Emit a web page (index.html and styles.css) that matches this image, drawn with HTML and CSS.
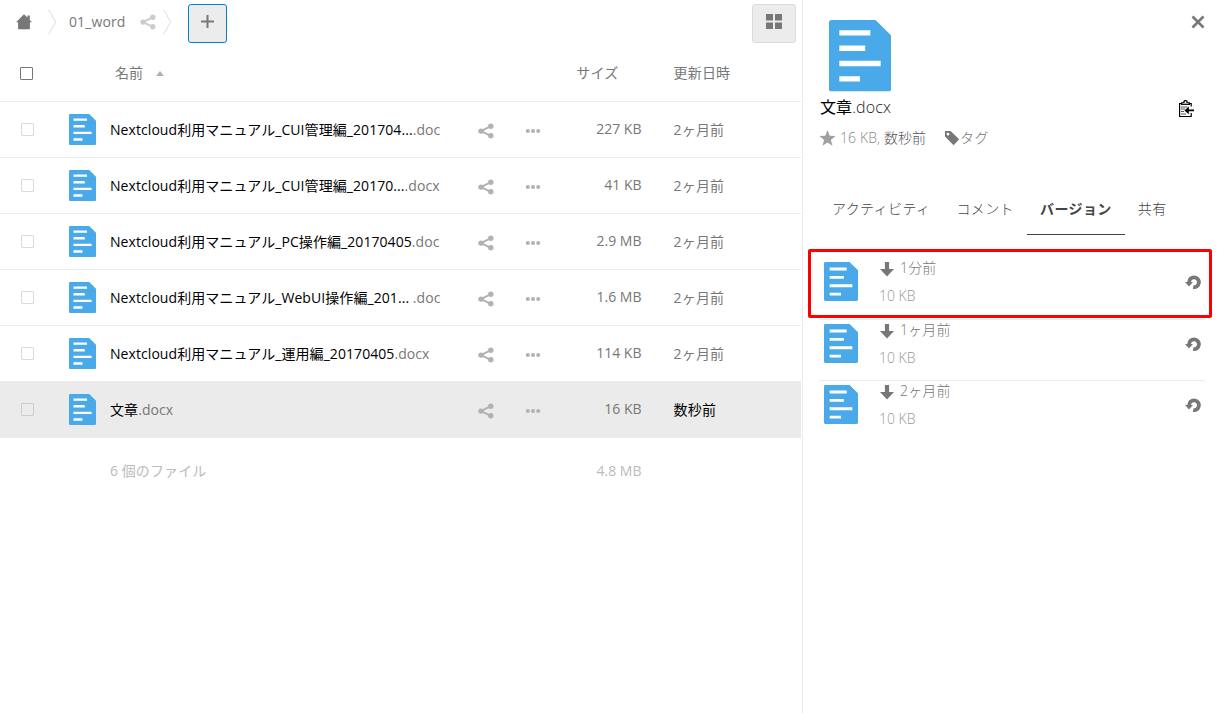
FILE: index.html
```html
<!DOCTYPE html>
<html lang="ja">
<head>
    <meta charset="UTF-8">
    <meta name="viewport" content="width=device-width, initial-scale=1.0">
    <title>01_word - ファイル</title>
    <link rel="stylesheet" href="styles.css">
</head>
<body>
    <!-- shared icons -->
    <svg class="sprite">
        <symbol id="doc" viewBox="0 0 12 14" preserveAspectRatio="none">
            <path fill="#4aaae9" d="M.5 0H9l3 3v10.5a.5.5 0 0 1-.5.5H.5a.5.5 0 0 1-.5-.5V.5A.5.5 0 0 1 .5 0z"/>
            <path fill="#fff" d="M2 2h6v1.05H2zM2 5h5v1.05H2zM2 8h8v1.05H2zM2 11h4v1.05H2z"/>
        </symbol>
        <symbol id="share" viewBox="0 0 16 16">
            <path d="M3 8.2 12.8 3.2M3 8.2l9.8 4.6" fill="none" stroke="currentColor" stroke-width="2"/>
            <circle cx="3" cy="8.1" r="2.7"/><circle cx="12.8" cy="3.2" r="2.7"/><circle cx="12.8" cy="12.8" r="2.7"/>
        </symbol>
        <symbol id="more" viewBox="0 0 16 16">
            <circle cx="2.8" cy="8" r="2.05"/><circle cx="8" cy="8" r="2.05"/><circle cx="13.2" cy="8" r="2.05"/>
        </symbol>
        <symbol id="down" viewBox="0 0 16 16">
            <path d="M5.9 1h4.2v7H15l-7 7.5L1 8h4.9z"/>
        </symbol>
        <symbol id="restore" viewBox="0 0 16 16">
            <path d="M4.1 8.3A4.9 4.9 0 1 1 8.2 13.1" fill="none" stroke="currentColor" stroke-width="3.8"/>
            <path d="M0 8h8L4 12.4z"/>
        </symbol>
    </svg>

    <div class="app">
        <div class="files">
            <div class="controls">
                <svg class="home" viewBox="0 0 16 16"><path d="M8 .2 0 8.2h2.1v7.1h4.4v-4h3v4h4.4V8.2H16l-2.2-2.2V1.5h-2.4v2.1z"/><path d="M6 10h4v5.3H6z"/></svg>
                <svg class="sep" viewBox="0 0 9 26"><path d="M.6.6 7.6 13 .6 25.4"/></svg>
                <span class="crumb">01_word</span>
                <svg class="crumb-share"><use href="#share"/></svg>
                <svg class="sep" viewBox="0 0 9 26"><path d="M.6.6 7.6 13 .6 25.4"/></svg>
                <button class="new"><svg viewBox="0 0 13 13"><path d="M5.5 0h2v5.5H13v2H7.5V13h-2V7.5H0v-2h5.5z"/></svg></button>
                <button class="view"><svg viewBox="0 0 16 15"><path d="M0 0h7v6.5H0zM9 0h7v6.5H9zM0 8.5h7V15H0zM9 8.5h7V15H9z"/></svg></button>
            </div>

            <div class="row head">
                <span class="check"></span>
                <span class="name">名前 <i class="sort"></i></span>
                <span class="size">サイズ</span>
                <span class="date">更新日時</span>
            </div>
            <div class="row">
                <span class="check"></span>
                <svg class="doc"><use href="#doc"/></svg>
                <span class="name">Nextcloud利用マニュアル_CUI管理編_201704...<em>.doc</em></span>
                <svg class="share"><use href="#share"/></svg>
                <svg class="more"><use href="#more"/></svg>
                <span class="size">227 KB</span>
                <span class="date">2ヶ月前</span>
            </div>
            <div class="row">
                <span class="check"></span>
                <svg class="doc"><use href="#doc"/></svg>
                <span class="name">Nextcloud利用マニュアル_CUI管理編_20170...<em>.docx</em></span>
                <svg class="share"><use href="#share"/></svg>
                <svg class="more"><use href="#more"/></svg>
                <span class="size">41 KB</span>
                <span class="date">2ヶ月前</span>
            </div>
            <div class="row">
                <span class="check"></span>
                <svg class="doc"><use href="#doc"/></svg>
                <span class="name">Nextcloud利用マニュアル_PC操作編_20170405<em>.doc</em></span>
                <svg class="share"><use href="#share"/></svg>
                <svg class="more"><use href="#more"/></svg>
                <span class="size">2.9 MB</span>
                <span class="date">2ヶ月前</span>
            </div>
            <div class="row">
                <span class="check"></span>
                <svg class="doc"><use href="#doc"/></svg>
                <span class="name">Nextcloud利用マニュアル_WebUI操作編_201... <em>.doc</em></span>
                <svg class="share"><use href="#share"/></svg>
                <svg class="more"><use href="#more"/></svg>
                <span class="size">1.6 MB</span>
                <span class="date">2ヶ月前</span>
            </div>
            <div class="row">
                <span class="check"></span>
                <svg class="doc"><use href="#doc"/></svg>
                <span class="name">Nextcloud利用マニュアル_運用編_20170405<em>.docx</em></span>
                <svg class="share"><use href="#share"/></svg>
                <svg class="more"><use href="#more"/></svg>
                <span class="size">114 KB</span>
                <span class="date">2ヶ月前</span>
            </div>
            <div class="row selected">
                <span class="check"></span>
                <svg class="doc"><use href="#doc"/></svg>
                <span class="name">文章<em>.docx</em></span>
                <svg class="share"><use href="#share"/></svg>
                <svg class="more"><use href="#more"/></svg>
                <span class="size">16 KB</span>
                <span class="date">数秒前</span>
            </div>
            <div class="row summary">
                <span class="name">6 個のファイル</span>
                <span class="size">4.8 MB</span>
            </div>
        </div>

        <div class="sidebar">
            <div class="top">
                <svg class="preview"><use href="#doc"/></svg>
                <svg class="close" viewBox="0 0 14 14"><path d="M1.5 1.5l11 11M12.5 1.5l-11 11"/></svg>
            </div>
            <div class="title">
                <span>文章<em>.docx</em></span>
                <svg class="clip" viewBox="0 0 17 18">
                    <path d="M13.2 6.5V3.5H1.6v13h11.6v-3.5" fill="none" stroke="#000" stroke-width="1.2"/>
                    <path d="M3 2.2h2.2a2.3 2.3 0 0 1 4.6 0H12V5H3z"/>
                    <path d="M4.4 3.2h6.2v.9H4.4z" fill="#ccc"/>
                    <circle cx="7.5" cy="2.2" r="1" fill="#fff"/>
                    <path d="M3 7h6.5M3 9h4M3 11.5h3M3 14h5" stroke="#555" stroke-width="1"/>
                    <path d="M6.4 10.4 10.8 6.6v2.9H16v1.8h-5.2v2.9z"/>
                </svg>
            </div>
            <div class="meta">
                <svg class="star" viewBox="0 0 16 16"><path d="M8 0l2.2 5.7 5.8.3-4.6 3.9 1.6 5.9L8 12.4l-5 3.4 1.6-5.9L0 6l5.8-.3z"/></svg>
                <span class="info">16 KB, <b>数秒前</b></span>
                <svg class="tag" viewBox="0 0 16 16"><path fill-rule="evenodd" d="M1.4 1h5.2l8.6 8.2-5.6 6L1 6.6V1.4zM4 2.8a1.4 1.4 0 1 0 0 2.8 1.4 1.4 0 0 0 0-2.8z"/></svg>
                <span class="tag-label">タグ</span>
            </div>
            <div class="tabs">
                <span>アクティビティ</span>
                <span>コメント</span>
                <span class="active">バージョン</span>
                <span>共有</span>
            </div>
            <div class="versions">
                <div class="marker"></div>
                <div class="version">
                    <svg class="vdoc"><use href="#doc"/></svg>
                    <div class="vinfo">
                        <div class="when"><svg><use href="#down"/></svg>1分前</div>
                        <div class="vsize">10 KB</div>
                    </div>
                    <svg class="restore"><use href="#restore"/></svg>
                </div>
                <div class="version">
                    <svg class="vdoc"><use href="#doc"/></svg>
                    <div class="vinfo">
                        <div class="when"><svg><use href="#down"/></svg>1ヶ月前</div>
                        <div class="vsize">10 KB</div>
                    </div>
                    <svg class="restore"><use href="#restore"/></svg>
                </div>
                <div class="version">
                    <svg class="vdoc"><use href="#doc"/></svg>
                    <div class="vinfo">
                        <div class="when"><svg><use href="#down"/></svg>2ヶ月前</div>
                        <div class="vsize">10 KB</div>
                    </div>
                    <svg class="restore"><use href="#restore"/></svg>
                </div>
            </div>
        </div>
    </div>
</body>
</html>
```
FILE: styles.css
```css
* {
    box-sizing: border-box;
}

body {
    margin: 0;
    background: #fff;
    color: #000;
    font-family: "Open Sans", "Noto Sans CJK JP", sans-serif;
    font-size: 14px;
    line-height: 20px;
    overflow: hidden;
}

svg {
    display: block;
    flex-shrink: 0;
    fill: currentColor;
}

em, b, i {
    font-style: normal;
    font-weight: inherit;
}

.sprite {
    display: none;
}

.app {
    display: flex;
    height: 713px;
}

.files {
    width: 801px;
    margin-right: 1px;
}

/* breadcrumbs and buttons */
.controls {
    display: flex;
    align-items: center;
    height: 45px;
    padding: 0 5px 1px 16px;
    color: #777;
}

.home {
    width: 16px;
    height: 16px;
}

.sep {
    width: 9px;
    height: 26px;
    margin-left: 16px;
    fill: none;
    stroke: #ddd;
}

.crumb {
    margin-left: 12px;
    padding-bottom: 1px;
    letter-spacing: .12px;
}

.crumb-share {
    width: 16px;
    height: 16px;
    margin-left: 14px;
    color: #ccc;
}

.crumb-share + .sep {
    margin-left: 7px;
}

button {
    display: flex;
    justify-content: center;
    height: 39px;
    margin: 3px 0 0;
    padding: 10px 0 0;
    background: #ececec;
    border: 1px solid #dcdcdc;
    border-radius: 3px;
    color: #777;
}

.new {
    width: 39px;
    margin-left: 16px;
    border-color: #0082c9;
}

.new svg {
    width: 13px;
    height: 13px;
}

.view {
    width: 44px;
    margin-left: auto;
    padding-top: 9px;
}

.view svg {
    width: 16px;
    height: 15px;
}

/* file list */
.row {
    display: grid;
    grid-template-columns: 69px 41px 367.5px 47.5px 46px 70.5px 1fr;
    align-items: center;
    height: 56px;
    border-bottom: 1px solid #ebebeb;
}

.row.head {
    height: 57px;
    color: #777;
}

.check {
    width: 13px;
    height: 13px;
    margin-left: 21px;
    border: 1px solid #dadada;
    border-radius: 1px;
}

.head .check {
    margin-left: 20px;
    border-color: #777;
}

.doc {
    width: 27px;
    height: 31px;
}

.name {
    grid-column: 3;
    white-space: nowrap;
    letter-spacing: .07px;
}

.name em {
    color: #777;
}

.head .name {
    padding-left: 5px;
}

.sort {
    display: inline-block;
    margin: 0 0 2px 9px;
    border: 4px solid transparent;
    border-top: 0;
    border-bottom: 5px solid #b0b0b0;
}

.share, .more {
    width: 16px;
    height: 16px;
    margin-top: 3px;
    color: #b2b2b2;
}

.size {
    grid-column: 6;
    padding-bottom: 2px;
    text-align: right;
    color: #777;
}

.head .size {
    padding: 0 23px 0 0;
    margin-left: -30px;
    letter-spacing: .2px;
}

.date {
    grid-column: 7;
    padding-left: 32px;
    letter-spacing: .2px;
    color: #777;
}

.selected {
    background: #ebebeb;
}

.selected .check {
    border-color: #ccc;
}

.selected .date {
    color: #000;
}

.row.summary {
    height: 66px;
    border: 0;
    color: #bbb;
}

.summary .size {
    padding: 0;
    color: #bbb;
}

/* details sidebar */
.sidebar {
    flex: 1;
    border-left: 1px solid #ebebeb;
    padding: 20px 14px 0 16px;
    font-weight: 300;
}

.top {
    display: flex;
    justify-content: space-between;
    height: 75px;
    padding-left: 10px;
}

.preview {
    width: 62px;
    height: 71.5px;
}

.close {
    width: 14px;
    height: 14px;
    margin-top: -5px;
    fill: none;
    stroke: #777;
    stroke-width: 2.6;
}

.title {
    display: flex;
    justify-content: space-between;
    height: 25px;
    padding: 0 10px 0 1px;
    font-size: 16px;
    font-weight: 400;
    line-height: 25px;
    letter-spacing: .1px;
}

.title em {
    font-weight: 300;
    color: #222;
}

.clip {
    width: 17px;
    height: 18px;
    margin-top: 5px;
}

.meta {
    display: flex;
    align-items: center;
    height: 36px;
    color: #888;
}

.star {
    width: 17px;
    height: 16px;
    color: #a0a0a0;
}

.info {
    width: 104px;
    margin-left: 4px;
    padding-bottom: 1px;
    letter-spacing: .1px;
}

.info b {
    color: #555;
}

.tag {
    width: 16px;
    height: 16px;
    color: #777;
}

.tag-label {
    padding-bottom: 1px;
    letter-spacing: .6px;
    color: #777;
}

.tabs {
    display: flex;
    height: 79px;
    padding-top: 27px;
    color: #444;
}

.tabs span {
    height: 52px;
    padding: 16px 13px 0;
    white-space: nowrap;
    letter-spacing: .4px;
}

.tabs .active {
    border-bottom: 1px solid #444;
    font-weight: 600;
}

/* versions tab */
.versions {
    position: relative;
    padding-top: 23px;
}

.marker {
    position: absolute;
    top: 14px;
    left: -11px;
    width: 404px;
    height: 69px;
    border: 3px solid #f00;
    border-radius: 2px;
}

.version {
    display: flex;
    height: 61.5px;
    padding: 4px 5px 0;
    border-bottom: 1px solid #ebebeb;
}

.version:nth-child(3) {
    height: 61px;
}

.version:last-child {
    border: 0;
}

.vdoc {
    width: 34px;
    height: 39px;
}

.vinfo {
    flex: 1;
    margin-left: 21px;
    color: #777;
}

.when {
    display: flex;
    align-items: center;
    height: 12px;
    letter-spacing: .15px;
}

.when svg {
    width: 16px;
    height: 16px;
    margin: 2px 5px 0 0;
    color: #777;
}

.vsize {
    margin-top: 12px;
    color: #999;
}

.restore {
    width: 16px;
    height: 16px;
    margin-top: 12px;
    margin-right: -1px;
    color: #777;
}
```
